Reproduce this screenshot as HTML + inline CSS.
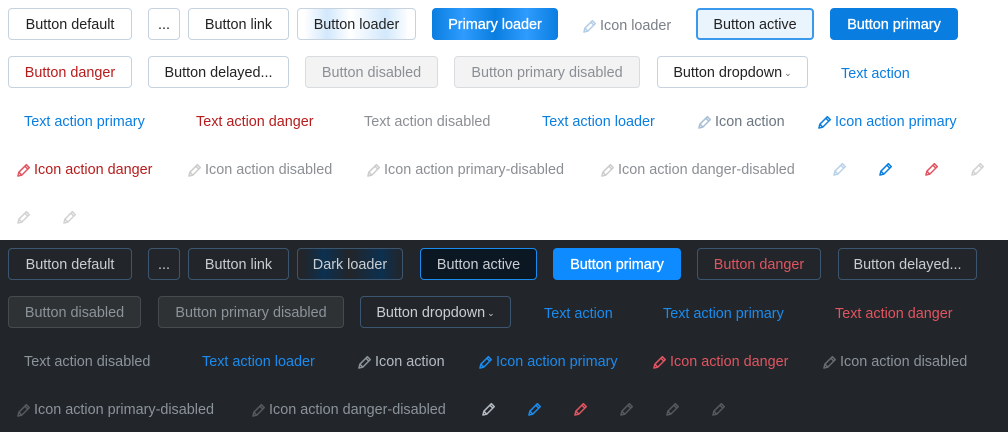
<!DOCTYPE html>
<html><head><meta charset="utf-8"><style>
*{margin:0;padding:0;box-sizing:border-box}
body{width:1008px;height:432px;position:relative;overflow:hidden;background:#fff;font-family:"Liberation Sans",sans-serif;font-size:14.4px}
.dk{position:absolute;left:0;top:240px;width:1008px;height:192px;background:#222529}
.b{position:absolute;height:32px;border:1px solid #c6d3df;border-radius:4px;display:flex;align-items:center;justify-content:center;color:#222;white-space:nowrap;background:#fff;padding-top:2px}
.t{position:absolute;height:20px;display:flex;align-items:center;white-space:nowrap;color:#6b7680;margin-top:1px}
.t svg{margin-right:3px}
.d .b,.b.d{background:#222529;border-color:#3c5670;color:#c9ced3}
.pr{font-weight:normal;-webkit-text-stroke:0.3px #fff}
</style></head><body>
<svg width="0" height="0" style="position:absolute"><defs><symbol id="p" viewBox="0 0 14 14"><path d="M1.8 12.2l.9-3.6 7-7 2.7 2.7-7 7z M8.4 3.1l2.7 2.7 M2.7 8.6l2.7 2.7" fill="none" stroke="currentColor" stroke-width="1.4" stroke-linejoin="round"/></symbol></defs></svg>

<div class="b" style="left:8px;top:8px;width:124px">Button default</div>
<div class="b" style="left:148px;top:8px;width:32px">...</div>
<div class="b" style="left:188px;top:8px;width:101px">Button link</div>
<div class="b" style="left:297px;top:8px;width:119px;background:linear-gradient(90deg,#fff 5%,#d2e8fb 25%,#fff 45%,#d2e8fb 75%,#fff 95%)">Button loader</div>
<div class="b pr" style="left:432px;top:8px;width:126px;border:none;color:#fff;background:linear-gradient(90deg,#0a7ee0,#2f9bff 25%,#0a7ee0 50%,#2f9bff 75%,#0a7ee0)">Primary loader</div>
<div class="t" style="left:582px;top:15px;color:#7a8088"><svg width="15" height="15" style="color:#b4cde6"><use href="#p"/></svg>Icon loader</div>
<div class="b" style="left:696px;top:8px;width:118px;border:2px solid #3b99ec;background:#eaf4fd">Button active</div>
<div class="b pr" style="left:830px;top:8px;width:128px;border:none;background:#0a7ee0;color:#fff">Button primary</div>

<div class="b" style="left:8px;top:56px;width:124px;color:#b71c1c">Button danger</div>
<div class="b" style="left:148px;top:56px;width:141px">Button delayed...</div>
<div class="b" style="left:305px;top:56px;width:133px;background:#f3f3f3;color:#8b8f94;border-color:#d8dcdf">Button disabled</div>
<div class="b" style="left:454px;top:56px;width:186px;background:#f3f3f3;color:#8b8f94;border-color:#d8dcdf">Button primary disabled</div>
<div class="b" style="left:657px;top:56px;width:151px">Button dropdown<span style="font-size:9px;margin-left:2px;color:#666">&#8964;</span></div>
<div class="t" style="left:841px;top:63px;color:#0a7ee0">Text action</div>

<div class="t" style="left:24px;top:111px;color:#0a7ee0">Text action primary</div>
<div class="t" style="left:196px;top:111px;color:#b71c1c">Text action danger</div>
<div class="t" style="left:364px;top:111px;color:#8b8f94">Text action disabled</div>
<div class="t" style="left:542px;top:111px;color:#0a7ee0">Text action loader</div>
<div class="t" style="left:697px;top:111px;color:#6b7680"><svg width="15" height="15" style="color:#a7bfd6"><use href="#p"/></svg>Icon action</div>
<div class="t" style="left:817px;top:111px;color:#0a7ee0"><svg width="15" height="15"><use href="#p"/></svg>Icon action primary</div>

<div class="t" style="left:16px;top:159px;color:#b71c1c"><svg width="15" height="15" style="color:#e05561"><use href="#p"/></svg>Icon action danger</div>
<div class="t" style="left:187px;top:159px;color:#8b8f94"><svg width="15" height="15" style="color:#ccc"><use href="#p"/></svg>Icon action disabled</div>
<div class="t" style="left:366px;top:159px;color:#8b8f94"><svg width="15" height="15" style="color:#ccc"><use href="#p"/></svg>Icon action primary-disabled</div>
<div class="t" style="left:600px;top:159px;color:#8b8f94"><svg width="15" height="15" style="color:#ccc"><use href="#p"/></svg>Icon action danger-disabled</div>
<svg width="15" height="15" style="position:absolute;left:832px;top:162px;color:#b9d1ea"><use href="#p"/></svg>
<svg width="15" height="15" style="position:absolute;left:878px;top:162px;color:#0a7ee0"><use href="#p"/></svg>
<svg width="15" height="15" style="position:absolute;left:924px;top:162px;color:#e05561"><use href="#p"/></svg>
<svg width="15" height="15" style="position:absolute;left:970px;top:162px;color:#d2d2d2"><use href="#p"/></svg>
<svg width="15" height="15" style="position:absolute;left:16px;top:210px;color:#d2d2d2"><use href="#p"/></svg>
<svg width="15" height="15" style="position:absolute;left:62px;top:210px;color:#d2d2d2"><use href="#p"/></svg>

<div class="dk"></div>
<div class="d">
<div class="b" style="left:8px;top:248px;width:124px">Button default</div>
<div class="b" style="left:148px;top:248px;width:32px">...</div>
<div class="b" style="left:188px;top:248px;width:101px">Button link</div>
<div class="b" style="left:297px;top:248px;width:106px;background:linear-gradient(90deg,#222529 5%,#0c3050 25%,#222529 50%,#0c3050 80%,#222529)">Dark loader</div>
<div class="b" style="left:420px;top:248px;width:117px;border-color:#1a8cf0;background:#0c1724">Button active</div>
<div class="b pr" style="left:553px;top:248px;width:128px;border:none;background:#0d8bff;color:#fff">Button primary</div>
<div class="b" style="left:697px;top:248px;width:124px;color:#e05561">Button danger</div>
<div class="b" style="left:838px;top:248px;width:139px">Button delayed...</div>
<div class="b" style="left:8px;top:296px;width:133px;background:#2f3234;color:#8b939b;border-color:#474b4f">Button disabled</div>
<div class="b" style="left:158px;top:296px;width:186px;background:#2f3234;color:#8b939b;border-color:#474b4f">Button primary disabled</div>
<div class="b" style="left:360px;top:296px;width:151px">Button dropdown<span style="font-size:9px;margin-left:2px">&#8964;</span></div>
</div>
<div class="t" style="left:544px;top:303px;color:#1a8cf0">Text action</div>
<div class="t" style="left:663px;top:303px;color:#1a8cf0">Text action primary</div>
<div class="t" style="left:835px;top:303px;color:#e05561">Text action danger</div>
<div class="t" style="left:24px;top:351px;color:#8b939b">Text action disabled</div>
<div class="t" style="left:202px;top:351px;color:#1a8cf0">Text action loader</div>
<div class="t" style="left:357px;top:351px;color:#b4bbc2"><svg width="15" height="15" style="color:#8b939b"><use href="#p"/></svg>Icon action</div>
<div class="t" style="left:478px;top:351px;color:#1a8cf0"><svg width="15" height="15"><use href="#p"/></svg>Icon action primary</div>
<div class="t" style="left:652px;top:351px;color:#e05561"><svg width="15" height="15"><use href="#p"/></svg>Icon action danger</div>
<div class="t" style="left:822px;top:351px;color:#8b939b"><svg width="15" height="15" style="color:#666b70"><use href="#p"/></svg>Icon action disabled</div>
<div class="t" style="left:16px;top:399px;color:#8b939b"><svg width="15" height="15" style="color:#555a5f"><use href="#p"/></svg>Icon action primary-disabled</div>
<div class="t" style="left:251px;top:399px;color:#8b939b"><svg width="15" height="15" style="color:#555a5f"><use href="#p"/></svg>Icon action danger-disabled</div>
<svg width="15" height="15" style="position:absolute;left:481px;top:402px;color:#b4bbc2"><use href="#p"/></svg>
<svg width="15" height="15" style="position:absolute;left:527px;top:402px;color:#1a8cf0"><use href="#p"/></svg>
<svg width="15" height="15" style="position:absolute;left:573px;top:402px;color:#e05561"><use href="#p"/></svg>
<svg width="15" height="15" style="position:absolute;left:619px;top:402px;color:#555a5f"><use href="#p"/></svg>
<svg width="15" height="15" style="position:absolute;left:665px;top:402px;color:#555a5f"><use href="#p"/></svg>
<svg width="15" height="15" style="position:absolute;left:711px;top:402px;color:#555a5f"><use href="#p"/></svg>
</body></html>
